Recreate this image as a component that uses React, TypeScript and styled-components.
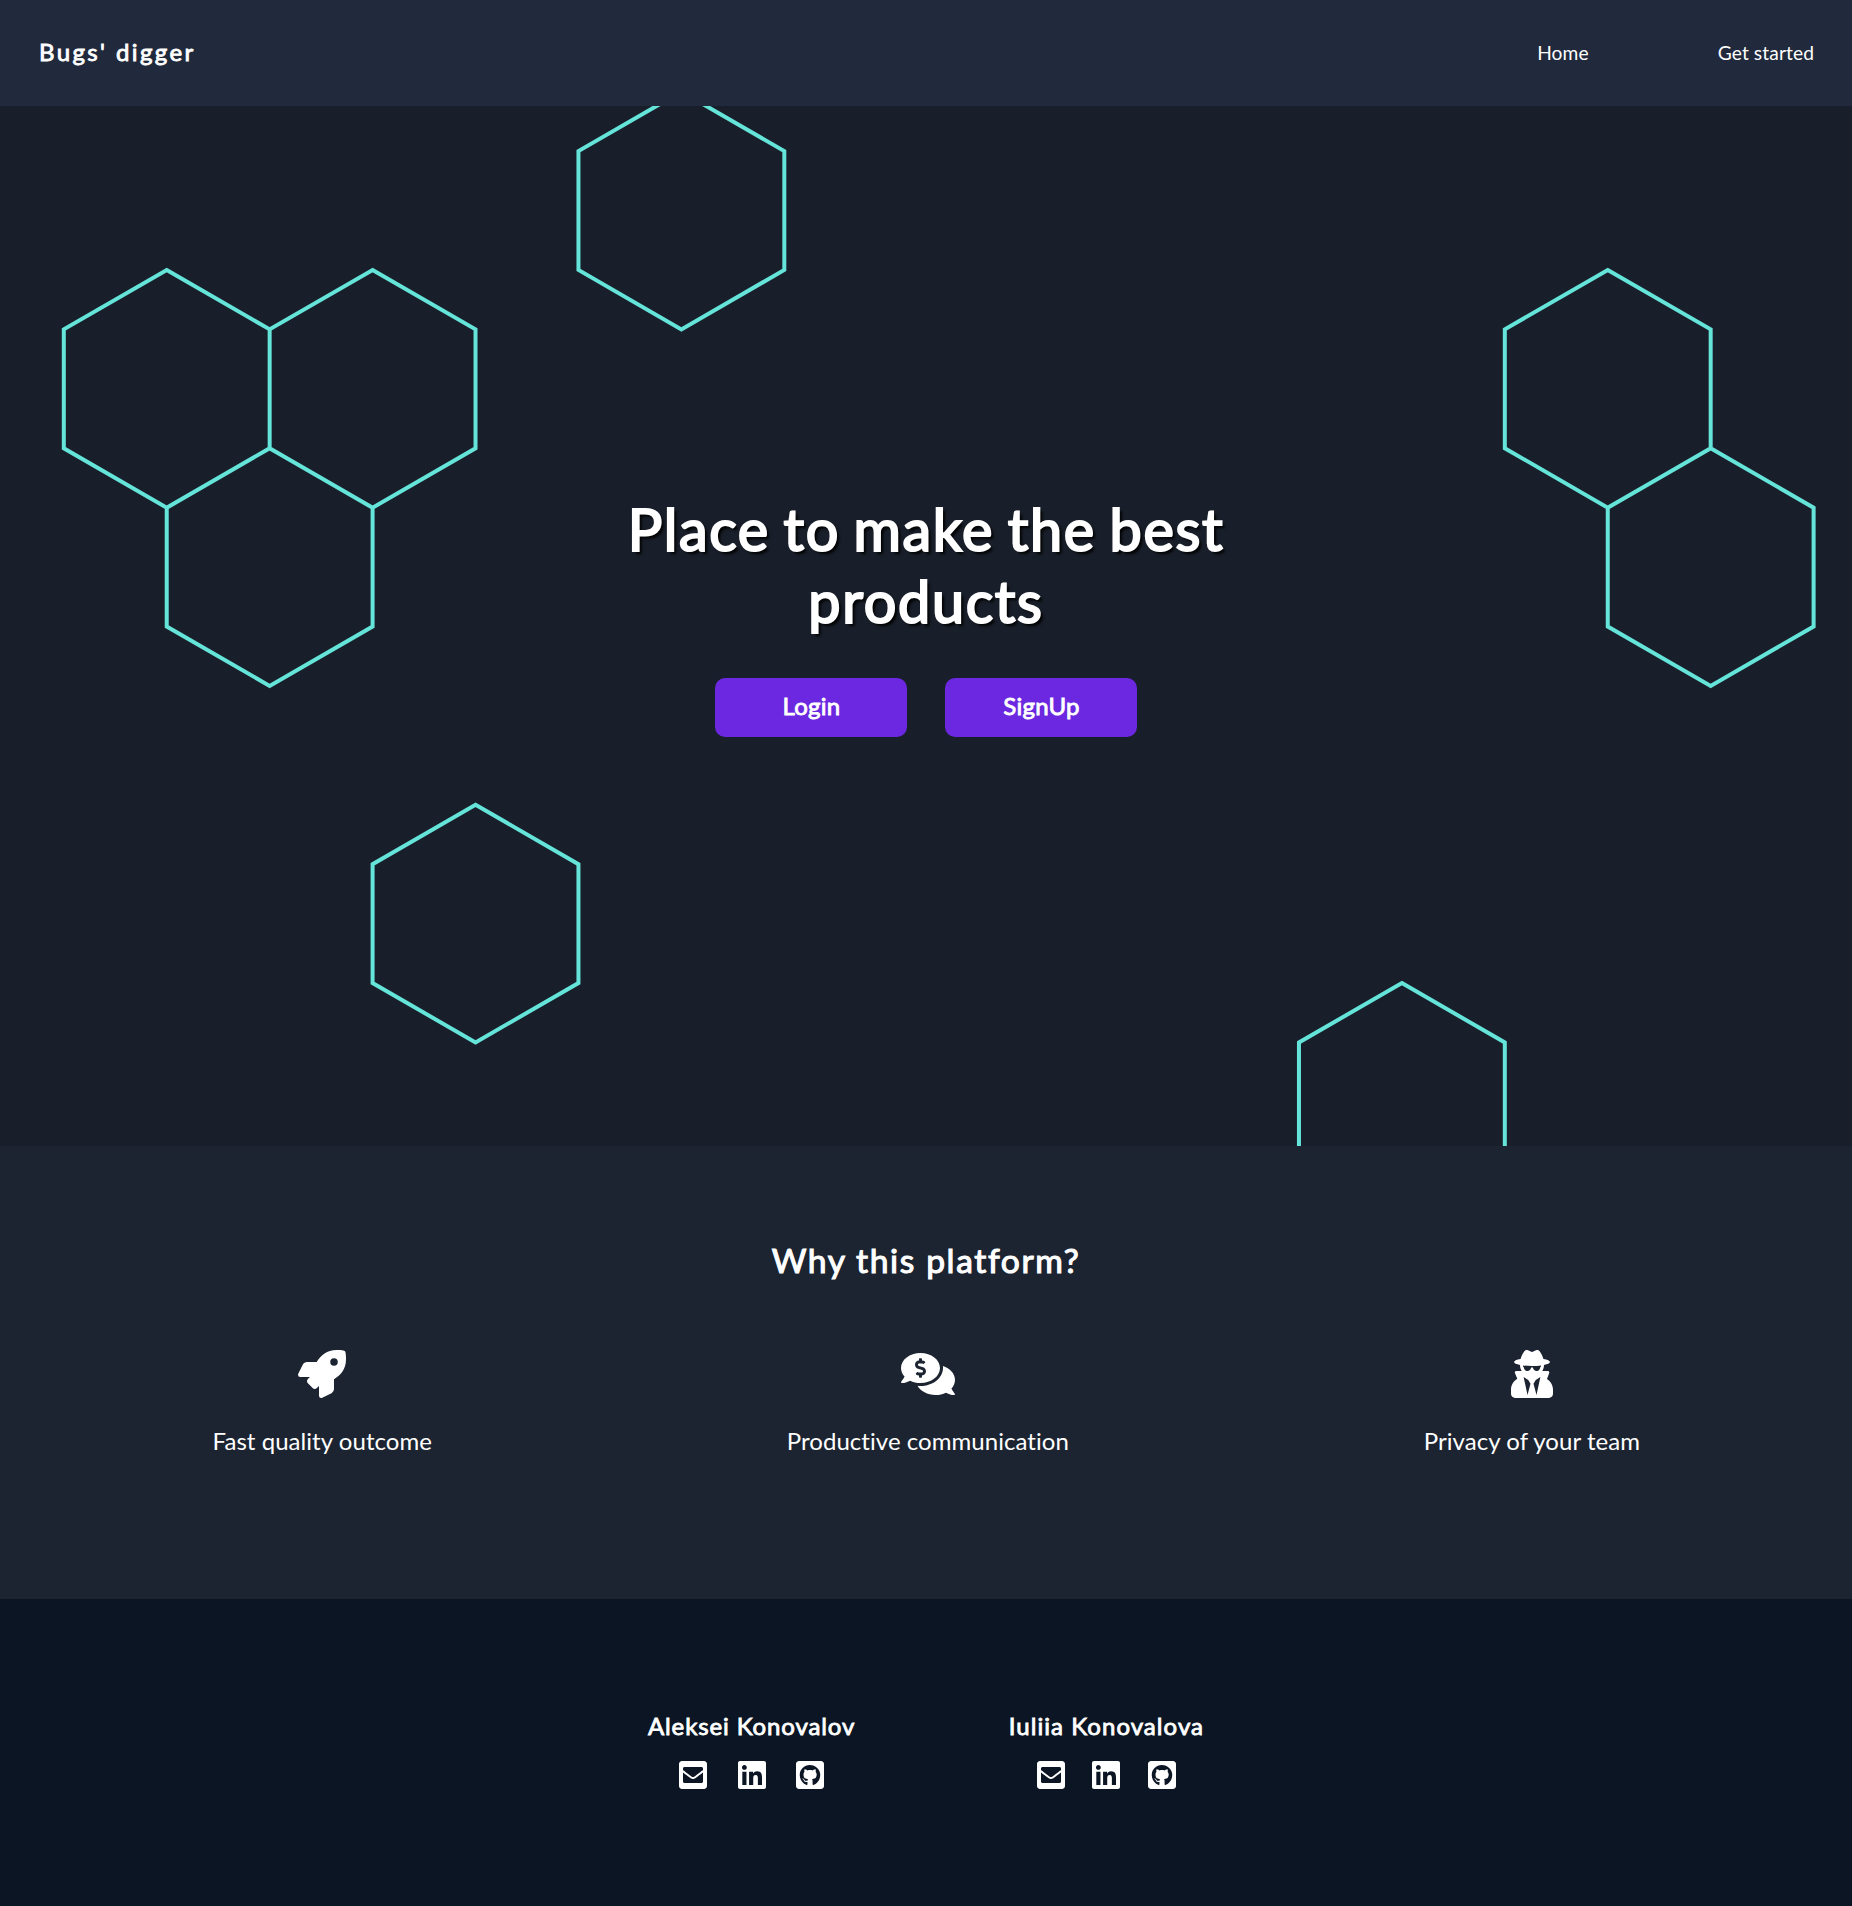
import React from "react";
import styled, { createGlobalStyle, css } from "styled-components";
import {
  FaRocket,
  FaCommentsDollar,
  FaUserSecret,
  FaEnvelopeSquare,
  FaLinkedin,
  FaGithubSquare,
} from "react-icons/fa";

const GlobalStyle = createGlobalStyle`
  *, *::before, *::after { box-sizing: border-box; margin: 0; padding: 0; }
  body {
    font-family: Lato, "Open Sans", sans-serif;
    letter-spacing: 0.05px;
    color: #fff;
    background: #0b1523;
  }
  a { color: inherit; text-decoration: none; }
`;

/* Regular face thickened with an outline: keeps the narrow regular widths. */
const thick = (width: number) => css`
  font-weight: 400;
  -webkit-text-stroke: ${width}px #fff;
`;

const Header = styled.header`
  display: flex;
  align-items: center;
  justify-content: space-between;
  height: 106px;
  padding: 0 38px 2px 39px;
  background: #212a3c;
`;

const Logo = styled.a`
  ${thick(0.85)}
  margin-bottom: 1px;
  font-size: 24px;
  letter-spacing: 2.4px;
`;

const Nav = styled.nav`
  display: flex;
  gap: 129px;
  font-size: 19.2px;
  letter-spacing: 0.1px;
`;

const Hero = styled.main`
  position: relative;
  display: flex;
  flex-direction: column;
  align-items: center;
  height: 1040px;
  padding-top: 387px;
  overflow: hidden;
  background: #191f2a;
`;

const Pattern = styled.svg`
  position: absolute;
  inset: 0;
  width: 100%;
  height: 100%;
  fill: none;
  stroke: #65e4da;
  stroke-width: 4;
`;

const Title = styled.h1`
  ${thick(2.1)}
  position: relative;
  width: 700px;
  font-size: 57.6px;
  line-height: 72px;
  letter-spacing: 1.65px;
  word-spacing: -2.8px;
  text-align: center;
  text-shadow: 3px 3px 3px #000;
`;

const Actions = styled.div`
  position: relative;
  display: flex;
  gap: 38px;
  margin-top: 41px;
`;

const Button = styled.button`
  width: 192px;
  height: 59px;
  padding: 0 0 5px 1px;
  border: 0;
  border-radius: 10px;
  background: #6b28e0;
  color: #fff;
  font: 400 24px Lato, sans-serif;
  letter-spacing: 0.3px;
  ${thick(0.85)}
`;

const Why = styled.section`
  display: flex;
  flex-direction: column;
  align-items: center;
  height: 453px;
  padding-top: 94px;
  background: #1c2431;
`;

const WhyTitle = styled.h2`
  ${thick(1.1)}
  font-size: 33.6px;
  line-height: 40px;
  letter-spacing: 1.62px;
`;

const Features = styled.ul`
  display: flex;
  justify-content: space-between;
  align-self: stretch;
  margin-top: 70px;
  padding: 0 212px 0 212.5px;
  list-style: none;
`;

const Feature = styled.li<{ $iconWidth: number }>`
  display: flex;
  flex-direction: column;
  align-items: center;
  gap: 28px;
  font-size: 24px;
  line-height: 30px;
  svg { width: ${(p) => p.$iconWidth}px; height: 48px; }
`;

const Footer = styled.footer`
  display: flex;
  justify-content: center;
  gap: 153.5px;
  height: 307px;
  padding-top: 112px;
  background: #0b1523;
`;

const Person = styled.div`
  display: flex;
  flex-direction: column;
`;

const Name = styled.h3<{ $spacing: number }>`
  ${thick(0.85)}
  font-size: 24px;
  line-height: 30px;
  letter-spacing: ${(p) => p.$spacing}px;
`;

const Socials = styled.div`
  display: flex;
  justify-content: space-evenly;
  margin-top: 18px;
  svg { display: block; width: 28px; height: 32px; }
`;

const STEP_X = 102.93;
const STEP_Y = 178.27;
const RADIUS = 118.85;

/* column / row of every hexagon on the honeycomb grid */
const hexagons = [
  [6, -1],
  [1, 0],
  [3, 0],
  [2, 1],
  [4, 3],
  [15, 0],
  [16, 1],
  [13, 4],
];

const honeycomb = hexagons
  .map(([col, row]) => {
    const x = 63.8 + col * STEP_X;
    const y = 282.8 + row * STEP_Y;
    const h = RADIUS / 2;
    return `M${x} ${y - RADIUS}L${x + STEP_X} ${y - h}V${y + h}L${x} ${y + RADIUS}L${x - STEP_X} ${y + h}V${y - h}Z`;
  })
  .join("");

const features = [
  { icon: <FaRocket />, width: 48, text: "Fast quality outcome" },
  { icon: <FaCommentsDollar />, width: 54, text: "Productive communication" },
  { icon: <FaUserSecret />, width: 42, text: "Privacy of your team" },
];

const people = [
  { name: "Aleksei Konovalov", spacing: 0.88 },
  { name: "Iuliia Konovalova", spacing: 1.05 },
];

export default function App() {
  return (
    <>
      <GlobalStyle />
      <Header>
        <Logo href="#">Bugs' digger</Logo>
        <Nav>
          <a href="#">Home</a>
          <a href="#">Get started</a>
        </Nav>
      </Header>
      <Hero>
        <Pattern viewBox="0 0 1852 1040" aria-hidden="true">
          <path d={honeycomb} />
        </Pattern>
        <Title>Place to make the best products</Title>
        <Actions>
          <Button>Login</Button>
          <Button>SignUp</Button>
        </Actions>
      </Hero>
      <Why>
        <WhyTitle>Why this platform?</WhyTitle>
        <Features>
          {features.map((f) => (
            <Feature key={f.text} $iconWidth={f.width}>
              {f.icon}
              <span>{f.text}</span>
            </Feature>
          ))}
        </Features>
      </Why>
      <Footer>
        {people.map((p) => (
          <Person key={p.name}>
            <Name $spacing={p.spacing}>{p.name}</Name>
            <Socials>
              <a href="#" aria-label="Email"><FaEnvelopeSquare /></a>
              <a href="#" aria-label="LinkedIn"><FaLinkedin /></a>
              <a href="#" aria-label="GitHub"><FaGithubSquare /></a>
            </Socials>
          </Person>
        ))}
      </Footer>
    </>
  );
}
